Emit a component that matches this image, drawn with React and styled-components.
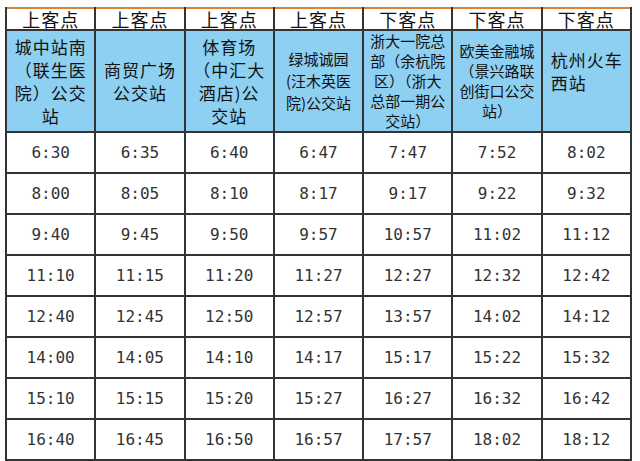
import styled, { createGlobalStyle } from "styled-components";

const GlobalStyle = createGlobalStyle`
  html, body {
    margin: 0;
    padding: 0;
    background: #fdfdfd;
  }
`;

const stops = [
  { type: "上客点", lines: ["城中站南", "（联生医", "院）公交", "站"], size: 17, ls: 1 },
  { type: "上客点", lines: ["商贸广场", "公交站"], size: 17, ls: 1 },
  { type: "上客点", lines: ["体育场", "（中汇大", "酒店)公", "交站"], size: 17, ls: 1 },
  { type: "上客点", lines: ["绿城诚园", "(汪木英医", "院)公交站"], size: 15, lh: 22 },
  { type: "下客点", lines: ["浙大一院总", "部（余杭院", "区）（浙大", "总部一期公", "交站）"], size: 15, lh: 20 },
  { type: "下客点", lines: ["欧美金融城", "（景兴路联", "创街口公交", "站）"], size: 15, lh: 20 },
  { type: "下客点", lines: ["杭州火车", "西站"], size: 17, ls: 1, left: true, shift: -10 },
];

const times = [
  ["6:30", "6:35", "6:40", "6:47", "7:47", "7:52", "8:02"],
  ["8:00", "8:05", "8:10", "8:17", "9:17", "9:22", "9:32"],
  ["9:40", "9:45", "9:50", "9:57", "10:57", "11:02", "11:12"],
  ["11:10", "11:15", "11:20", "11:27", "12:27", "12:32", "12:42"],
  ["12:40", "12:45", "12:50", "12:57", "13:57", "14:02", "14:12"],
  ["14:00", "14:05", "14:10", "14:17", "15:17", "15:22", "15:32"],
  ["15:10", "15:15", "15:20", "15:27", "16:27", "16:32", "16:42"],
  ["16:40", "16:45", "16:50", "16:57", "17:57", "18:02", "18:12"],
];

const App = () => {
  return (
    <Page>
      <GlobalStyle />
      <Timetable>
        <thead>
          <TypeRow>
            {stops.map((s, i) => (
              <TypeCell key={i}>{s.type}</TypeCell>
            ))}
          </TypeRow>
          <StopRow>
            {stops.map((s, i) => (
              <StopCell
                key={i}
                $size={s.size}
                $lh={s.lh}
                $ls={s.ls}
                $left={s.left}
              >
                <StopName $shift={s.shift}>
                  {s.lines.map((l, j) => (
                    <span key={j}>{l}</span>
                  ))}
                </StopName>
              </StopCell>
            ))}
          </StopRow>
        </thead>
        <tbody>
          {times.map((row, r) => (
            <TimeRow key={r}>
              {row.map((t, c) => (
                <TimeCell key={c}>{t}</TimeCell>
              ))}
            </TimeRow>
          ))}
        </tbody>
      </Timetable>
    </Page>
  );
};

const Page = styled.div`
  width: 640px;
  height: 461px;
  padding: 7px 0 0 5px;
  box-sizing: border-box;
  overflow: hidden;
  font-family: "Noto Sans CJK SC", "Noto Sans", sans-serif;
  color: #111;
`;

const Timetable = styled.table`
  width: 627px;
  table-layout: fixed;
  border-collapse: collapse;
  border-top: 2px solid #d9823a;
  border-left: 2px solid #333;
  border-right: 2px solid #333;
  border-bottom: 2px solid #333;
  background: #fff;
`;

const TypeRow = styled.tr`
  height: 22px;
`;

const TypeCell = styled.th`
  padding: 0;
  font-weight: 400;
  font-size: 18px;
  line-height: 20px;
  letter-spacing: 1px;
  text-align: center;
  border-left: 2px solid #333;
  border-bottom: 2px solid #333;
  color: #111;
`;

const StopRow = styled.tr`
  height: 100px;
`;

const StopCell = styled.th`
  padding: 0 3px;
  background: #8dd0f2;
  border-left: 2px solid #333;
  border-bottom: 2px solid #333;
  font-weight: 400;
  font-size: ${(p) => p.$size}px;
  line-height: ${(p) => p.$lh || 23}px;
  letter-spacing: ${(p) => p.$ls || 0}px;
  text-align: ${(p) => (p.$left ? "left" : "center")};
  vertical-align: middle;
  color: #111;
  ${(p) => p.$left && "padding-left: 8px;"}
`;

const StopName = styled.div`
  display: flex;
  flex-direction: column;
  transform: translateY(${(p) => p.$shift || 0}px);
  span {
    white-space: nowrap;
  }
`;

const TimeRow = styled.tr`
  height: 41px;
`;

const TimeCell = styled.td`
  padding: 0;
  text-align: center;
  vertical-align: middle;
  border-left: 2px solid #333;
  border-bottom: 2px solid #333;
  font-family: "DejaVu Sans Mono", "Liberation Mono", monospace;
  font-size: 16px;
  color: #333;
`;

export default App;
